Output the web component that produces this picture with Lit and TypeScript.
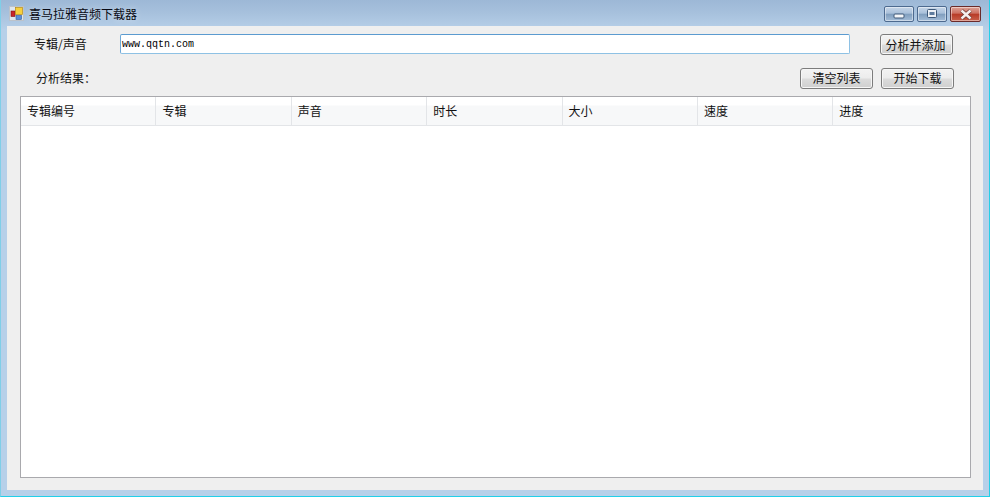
import { LitElement, html, css } from "lit";
import { customElement } from "lit/decorators.js";

const COLS = ["专辑编号", "专辑", "声音", "时长", "大小", "速度", "进度"];

@customElement("app-root")
export class AppRoot extends LitElement {
  static styles = css`
    :host { display: block; width: 990px; height: 497px; font-family: "Noto Sans CJK SC", sans-serif; font-size: 12px; color: #111; overflow: hidden; }
    * { box-sizing: border-box; }
    .win { width: 990px; height: 497px; display: flex; flex-direction: column;
      background: linear-gradient(180deg, #9db8d6 0, #a6c0dc 12px, #b7d0e9 30px, #b7d0e9 100%);
      border-bottom: 1px solid #22cfe8; border-left: 1px solid #7fcfe8; border-right: 1px solid #22cfe8; }
    .title { height: 26px; flex: none; display: flex; align-items: center; padding: 0 4px 0 8px; }
    .title .ico { width: 16px; height: 16px; flex: none; display: block; margin-top: 2px; }
    .title .t { margin-left: 4px; line-height: 16px; color: #0a0a14; margin-top: 1px; text-shadow: 0 0 6px rgba(255,255,255,.5); }
    .ctrls { margin-left: auto; display: flex; gap: 3px; margin-top: 2px; margin-right: 4px; }
    .cb { height: 16px; border-radius: 2px; display: flex; align-items: center; justify-content: center; border: 1px solid #4d6a8f; box-shadow: inset 0 0 0 1px rgba(255,255,255,.45);
      background: linear-gradient(180deg, #c6d6e8 0, #a9c0da 45%, #7f9dbd 50%, #a4bdd8 100%); }
    .cb.min, .cb.max { width: 30px; }
    .cb.close { width: 31px; border-color: #6a2a2a; background: linear-gradient(180deg, #dda398 0, #cd6f60 45%, #b73a26 50%, #c9604b 100%); }
    .cb svg { display: block; }
    .body { flex: 1; margin: 0 6px 6px 6px; background: #efefef; padding: 8px 12px 12px 13px; display: flex; flex-direction: column; }
    .row1 { display: flex; align-items: center; height: 20px; padding-left: 14px; }
    .row1 .lbl { width: 86px; margin-bottom: 2px; }
    .inp { width: 730px; height: 20px; background: #fff; border: 1px solid #8ec1e4; border-top-color: #5b9bd0; border-left-color: #6fa9d8; border-radius: 2px; font-family: "Liberation Mono", monospace; font-size: 10px; line-height: 19px; padding-left: 1px; color: #000; }
    .btn { height: 21px; width: 73px; border: 1px solid #7c7c7c; border-radius: 3px; display: flex; align-items: center; justify-content: center; color: #111; box-shadow: inset 0 0 0 1px #f6f6f6;
      background: linear-gradient(180deg, #f3f3f3 0, #ececec 48%, #dcdcdc 52%, #cfcfcf 100%); }
    .row1 .btn { margin-left: 30px; padding-right: 2px; }
    .row2 { display: flex; align-items: center; height: 21px; margin-top: 14px; padding-left: 16px; line-height: 19px; }
    .row2 .lab { margin-bottom: 2px; }
    .row2 .sp { flex: 1; }
    .row2 .btn { padding-bottom: 2px; }
    .row2 .btn + .btn { margin-left: 8px; }
    .row2 .btn:last-child { margin-right: 17px; }
    .table { margin-top: 7px; flex: 1; width: 951px; background: #fff; border: 1px solid #a9a9ad; }
    .head { display: grid; grid-template-columns: repeat(7, 135.4px); height: 29px; border-bottom: 1px solid #e3e5e8;
      background: linear-gradient(180deg, #fff 0, #fff 8px, #f7f8f9 9px, #f7f8f9 100%); }
    .head div { display: flex; align-items: center; padding: 0 0 2px 6px; border-right: 1px solid #e3e5e8; color: #111; }
    .head div:last-child { border-right: 0; }
  `;

  render() {
    return html`<div class="win">
      <div class="title">
        <svg class="ico" viewBox="0 0 16 16">
          <rect x="0.5" y="0.5" width="14" height="14" fill="#dfe6ee" stroke="#bcc2ca" stroke-width="1"/>
          <rect x="2" y="5" width="4" height="5.5" fill="#c8242a" stroke="#7c1518" stroke-width=".6"/>
          <rect x="6.5" y="1.5" width="7" height="7" fill="#f7cf3d" stroke="#b58a14" stroke-width=".7"/>
          <rect x="7" y="9.5" width="5.5" height="4" fill="#5b8ed6" stroke="#335d9c" stroke-width=".6"/>
        </svg>
        <span class="t">喜马拉雅音频下载器</span>
        <div class="ctrls">
          <div class="cb min"><svg width="12" height="10" viewBox="0 0 12 10"><rect x="1" y="5" width="10" height="4" rx="1" fill="#f4f6f9" stroke="#3e5878"/></svg></div>
          <div class="cb max"><svg width="12" height="10" viewBox="0 0 12 10"><rect x="1.5" y="0.5" width="9" height="8" rx="1" fill="#eef2f7" stroke="#3e5878"/><rect x="3.5" y="3" width="5" height="3" fill="#5f7c9e"/></svg></div>
          <div class="cb close"><svg width="14" height="11" viewBox="0 0 14 11"><path d="M2.5 1.5 L11.5 9.5 M11.5 1.5 L2.5 9.5" stroke="#6b3a34" stroke-width="3.8"/><path d="M2.5 1.5 L11.5 9.5 M11.5 1.5 L2.5 9.5" stroke="#f5f0ee" stroke-width="2.4"/></svg></div>
        </div>
      </div>
      <div class="body">
        <div class="row1">
          <span class="lbl">专辑/声音</span>
          <div class="inp">www.qqtn.com</div>
          <div class="btn">分析并添加</div>
        </div>
        <div class="row2">
          <span class="lab">分析结果：</span>
          <span class="sp"></span>
          <div class="btn">清空列表</div>
          <div class="btn">开始下载</div>
        </div>
        <div class="table">
          <div class="head">${COLS.map((c) => html`<div>${c}</div>`)}</div>
        </div>
      </div>
    </div>`;
  }
}
